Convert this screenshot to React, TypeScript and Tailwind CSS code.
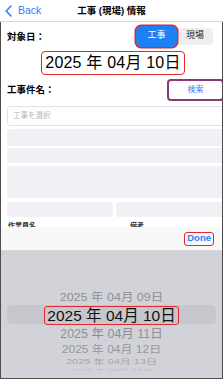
import React from "react";

const jp = { fontFamily: '"Liberation Sans", "Noto Sans CJK JP", sans-serif' };

function PickerRow({ text, cls }: { text: string; cls: string }) {
  return <div className={`flex items-center justify-center whitespace-nowrap ${cls}`}>{text}</div>;
}

export default function App() {
  return (
    <div className="relative w-[223px] h-[379px] overflow-hidden bg-white text-black" style={jp}>
      {/* Header */}
      <div className="relative h-[22px] flex items-center border-b border-[#d8d8d8] bg-white">
        <div className="flex items-center pl-[5px] text-[#2f7ff6]">
          <svg width="7" height="12" viewBox="0 0 7 12" className="mr-[6px]">
            <path d="M6 1 L1.2 6 L6 11" fill="none" stroke="#2f7ff6" strokeWidth="1.6" strokeLinecap="round" strokeLinejoin="round" />
          </svg>
          <span className="text-[10.5px] leading-none">Back</span>
        </div>
        <div className="absolute left-0 right-0 top-0 h-[22px] flex items-center justify-center text-[9.5px] font-bold pointer-events-none">
          工事 (現場) 情報
        </div>
      </div>

      {/* Body with frame */}
      <div className="h-[357px] border-x border-b border-[#4d4d4d] overflow-hidden">
        <div className="w-[230px]">
          {/* 対象日 row */}
          <div className="flex items-center h-[28px] pl-[6px] pr-[10px] justify-between">
            <span className="text-[9.5px] font-bold mt-[2px]">対象日：</span>
            <div className="flex items-center h-[17px] bg-[#eeeeef] rounded-[4px] mr-[8px]">
              <div className="w-[41px] h-[21px] flex items-center justify-center bg-[#1e80f3] text-white text-[9px] rounded-[5px] ring-[1.5px] ring-[#e0282e] ring-offset-0">
                工事
              </div>
              <div className="w-[36px] flex items-center justify-center text-[9px] text-[#222]">現場</div>
            </div>
          </div>
          {/* Date */}
          <div className="flex pl-[40px] mt-[1px]">
            <div className="w-[144px] h-[24px] flex items-center justify-center border-[1.5px] border-[#e0282e] rounded-[4px] text-[16px] tracking-[0.2px]">
              2025 年 04月 10日
            </div>
          </div>
          {/* 工事件名 row */}
          <div className="flex items-center justify-between mt-[4px] pl-[6px] pr-[7px] h-[22px]">
            <span className="text-[9.5px] font-bold">工事件名：</span>
            <div className="w-[57px] h-[22px] flex items-center justify-center border-2 border-[#8a3a72] rounded-[4px] text-[8px] text-[#2f7ff6]">
              検索
            </div>
          </div>
          {/* Input */}
          <div className="ml-[6px] mt-[5px] h-[20px] border border-[#e2e2e6] rounded-[3px] flex items-center pl-[5px] text-[7.5px] text-[#b8b8bc]">
            工事を選択
          </div>
          {/* Gray boxes */}
          <div className="ml-[6px] mt-[3px] flex flex-col gap-[2px]">
            <div className="h-[17px] bg-[#f0f0f5] rounded-[3px]" />
            <div className="h-[15px] bg-[#f0f0f5] rounded-[3px]" />
          </div>
          <div className="ml-[6px] mt-[3px] h-[32px] bg-[#f0f0f5] rounded-[3px]" />
          <div className="ml-[6px] mt-[4px] flex gap-[3px]">
            <div className="w-[106px] h-[15px] bg-[#f0f0f5] rounded-[3px]" />
            <div className="flex-1 h-[15px] bg-[#f0f0f5] rounded-[3px]" />
          </div>
          <div className="flex ml-[7px] mt-[4px] text-[7px] font-bold text-[#333]">
            <span className="w-[122px]">作業員名　　</span>
            <span>備考</span>
          </div>
        </div>
      </div>

      {/* Picker overlay */}
      <div className="absolute left-[1px] right-[1px] top-[227px] bottom-[1px] flex flex-col">
        <div className="h-[24px] bg-[#f8f8f8] border-b border-[#d9d9dc] flex items-center justify-end pr-[8px]">
          <div className="px-[2px] h-[14px] flex items-center border-[1.5px] border-[#e0282e] rounded-[3px] text-[9.5px] font-bold text-[#2f7ff6]">
            Done
          </div>
        </div>
        <div className="flex-1 bg-[#d1d3d9] relative">
          <div className="absolute left-[6px] right-[6px] top-[54px] h-[19px] bg-[#c5c7cd] rounded-[5px]" />
          <div className="relative flex flex-col items-center pt-[38px]">
            <PickerRow text="2025 年 04月 09日" cls="h-[16px] text-[12.5px] text-[#8e8f94] scale-y-[0.9]" />
            <div className="h-[19px] px-[2px] flex items-center border-[1.5px] border-[#e0282e] rounded-[3px] text-[15.5px] text-[#111] whitespace-nowrap mt-[1px]">
              2025 年 04月 10日
            </div>
            <PickerRow text="2025 年 04月 11日" cls="h-[17px] mt-[1px] text-[12.5px] text-[#8e8f94]" />
            <PickerRow text="2025 年 04月 12日" cls="h-[14px] text-[12px] text-[#96979c] scale-y-[0.85]" />
            <PickerRow text="2025 年 04月 13日" cls="h-[10px] text-[11px] text-[#a3a4a9] scale-y-[0.6]" />
            <PickerRow text="2025 年 04月 14日" cls="h-[5px] text-[10px] text-[#b3b4b9] scale-y-[0.35] overflow-hidden" />
          </div>
        </div>
      </div>
    </div>
  );
}
